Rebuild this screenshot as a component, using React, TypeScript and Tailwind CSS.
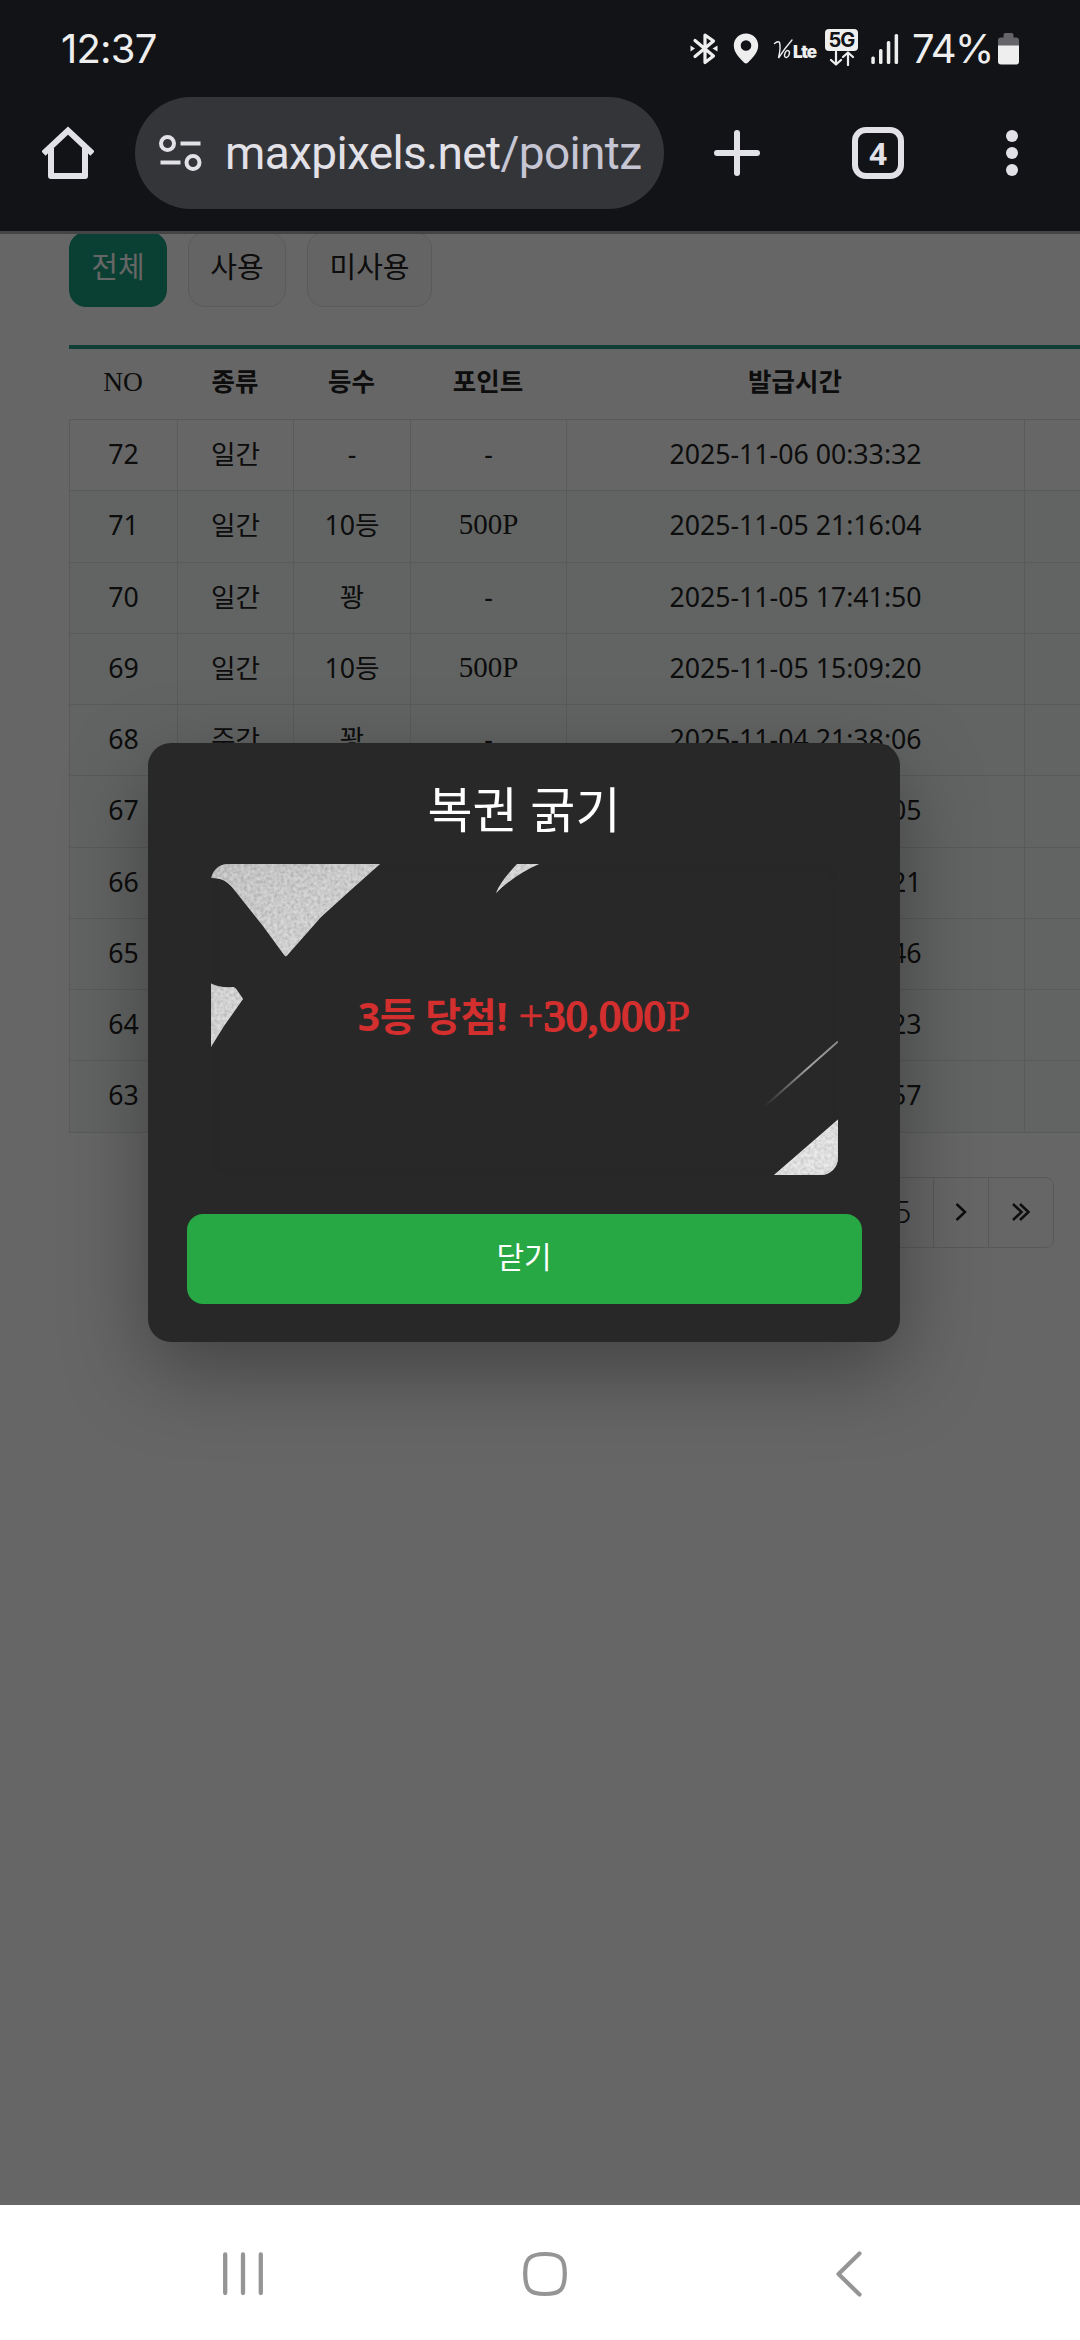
import React from "react";

const ink = "#e3e1e8";

const rows = [
  ["72", "일간", "-", "-", "2025-11-06 00:33:32"],
  ["71", "일간", "10등", "500P", "2025-11-05 21:16:04"],
  ["70", "일간", "꽝", "-", "2025-11-05 17:41:50"],
  ["69", "일간", "10등", "500P", "2025-11-05 15:09:20"],
  ["68", "주간", "꽝", "-", "2025-11-04 21:38:06"],
  ["67", "", "", "", "2025-11-04 19:22:05"],
  ["66", "", "", "", "2025-11-04 16:10:21"],
  ["65", "", "", "", "2025-11-03 22:41:46"],
  ["64", "", "", "", "2025-11-03 18:05:23"],
  ["63", "", "", "", "2025-11-03 14:12:57"],
];

const grid =
  "grid grid-cols-[108px_116px_117px_156px_458px_200px] text-center";

function StatusBar() {
  return (
    <div className="flex h-[97px] items-start pt-[24px] pl-[61px] text-[#eeeeee] font-['Inter']">
      <span className="w-[629px] text-[40px] leading-[49px] tracking-[-0.8px]">12:37</span>
      <svg className="mt-[8px] h-[33px] w-[28px]" viewBox="0 0 28 33" fill="none" stroke="#eee" strokeWidth="3.200" strokeLinejoin="round" strokeLinecap="round">
        <path d="M5 8.500L23.500 24L15 30.500V3L23.500 9L5 24.500" />
        <path d="M0.500 13.500V19.500L5 16.500ZM27.500 13.500V19.500L22.500 16.500Z" fill="#eee" stroke="none" />
      </svg>
      <svg className="mt-[9px] ml-[15px] h-[31px] w-[26px]" viewBox="0 0 26 31">
        <path fillRule="evenodd" fill="#eee" d="M13 0.500C6 0.500 0.800 5.800 0.800 12.500C0.800 20 7 25 11.200 29.800Q13 31.300 14.800 29.800C19 25 25.200 20 25.200 12.500C25.200 5.800 20 0.500 13 0.500ZM13 7.200A5.300 5.300 0 1 1 13 17.800A5.300 5.300 0 1 1 13 7.200Z" />
      </svg>
      <div className="mt-[15px] ml-[14px] flex h-[22px] w-[42px] items-end">
        <svg className="h-[22px] w-[20px] shrink-0" viewBox="0 0 20 22" fill="none" stroke="#eee" strokeLinecap="round">
          <path d="M1.500 4.500Q5.500 1.500 6.500 3.500Q8 8 5.500 19Q12 9 19 1" strokeWidth="1.400" />
          <ellipse cx="14" cy="15" rx="2.200" ry="3.600" transform="rotate(20 14 15)" strokeWidth="1.400" />
        </svg>
        <span className="text-[17px] leading-[18px] font-black tracking-[-1.1px]">Lte</span>
      </div>
      <div className="mt-[5px] ml-[10px] flex w-[33px] flex-col items-center">
        <div className="h-[22px] w-[33px] rounded-[4px] bg-[#eee] text-center text-[20px] leading-[22px] font-bold tracking-[-0.8px] text-[#121317]">5G</div>
        <svg className="h-[15px] w-[26px]" viewBox="0 0 26 15" fill="none" stroke="#eee" strokeWidth="2.200" strokeLinecap="round" strokeLinejoin="round">
          <path d="M7 1V13M2 9L7 13.500L12 9M19 14V2M14 6L19 1.500L24 6" />
        </svg>
      </div>
      <svg className="mt-[10px] ml-[13px] h-[30px] w-[28px]" viewBox="0 0 28 30" fill="#eee">
        <rect x="0.300" y="22.500" width="3.500" height="7.500" rx="1.500" />
        <rect x="8" y="15" width="3.500" height="15" rx="1.500" />
        <rect x="15.800" y="7" width="3.500" height="23" rx="1.500" />
        <rect x="23.600" y="0" width="3.500" height="30" rx="1.500" />
      </svg>
      <span className="ml-[13px] w-[86px] text-[40px] leading-[49px] tracking-[-1.6px]">74%</span>
      <svg className="mt-[9px] h-[32px] w-[21px]" viewBox="0 0 21 32">
        <path d="M0 13V7Q0 4.500 3 4.500H5.500V2Q5.500 0 7.500 0H13.500Q15.500 0 15.500 2V4.500H18Q21 4.500 21 7.500V13Z" fill="#656569" />
        <path d="M0 12.500H21V28.500Q21 31.500 18 31.500H3Q0 31.500 0 28.500Z" fill="#eee" />
      </svg>
    </div>
  );
}

function BrowserBar() {
  return (
    <div className="flex h-[134px] items-start pl-[42px]">
      <svg className="mt-[29px] h-[54px] w-[52px]" viewBox="0 0 52 54" fill="none" stroke={ink} strokeWidth="6" strokeLinejoin="round">
        <path d="M1.500 27.500L26 4.500L50.500 27.500" strokeLinejoin="miter" />
        <path d="M9 22V50H43V22" />
      </svg>
      <div className="ml-[41px] flex h-[112px] w-[529px] items-center rounded-full bg-[#343539] pl-[24px]">
        <svg className="h-[38px] w-[43px] shrink-0" viewBox="0 0 43 38" fill="none" stroke={ink} strokeWidth="4">
          <circle cx="8.500" cy="9.500" r="6.500" />
          <path d="M21.500 9.500H41.500M1.500 28.500H21.500" />
          <circle cx="34" cy="28.500" r="6.500" />
        </svg>
        <span className="ml-[23px] font-['Roboto'] text-[46px] leading-[60px] tracking-[-0.65px] whitespace-nowrap text-[#e3e1e8]">
          maxpixels.net<span className="text-[#c5c5d3]">/pointz</span>
        </span>
      </div>
      <svg className="mt-[32px] ml-[49px] h-[48px] w-[48px]" viewBox="0 0 48 48" fill="none" stroke={ink} strokeWidth="6" strokeLinecap="round">
        <path d="M4 24H44M24 4V44" />
      </svg>
      <div className="mt-[30px] ml-[91px] flex h-[52px] w-[52px] items-center justify-center rounded-[14px] border-[6px] border-[#e3e1e8] font-['Open_Sans'] text-[31px] leading-none font-bold text-[#e3e1e8]">
        4
      </div>
      <div className="mt-[33px] ml-[102px] flex flex-col gap-[5px]">
        <i className="size-[12px] rounded-full bg-[#e3e1e8]" />
        <i className="size-[12px] rounded-full bg-[#e3e1e8]" />
        <i className="size-[12px] rounded-full bg-[#e3e1e8]" />
      </div>
    </div>
  );
}

function History() {
  return (
    <div className="pt-px pl-[69px] text-[26.7px] text-[#222]">
      <div className="flex gap-[21px] text-[29px] leading-[40px]">
        <div className="h-[75px] w-[98px] rounded-[17px] bg-[#19a080] pt-[15px] text-center text-white">전체</div>
        <div className="h-[75px] w-[98px] rounded-[17px] border border-[#e0e0e0] bg-[#fbfbfb] pt-[14px] text-center">사용</div>
        <div className="h-[75px] w-[125px] rounded-[17px] border border-[#e0e0e0] bg-[#fbfbfb] pt-[14px] text-center">미사용</div>
      </div>
      <div className="mt-[38px] w-[1156px]">
        <div className={`${grid} h-[74px] border-t-4 border-[#2e9e84] text-[25.5px] leading-[65px] font-bold`}>
          <div className="font-['Liberation_Serif'] text-[27.5px] font-normal">NO</div>
          <div>종류</div>
          <div>등수</div>
          <div>포인트</div>
          <div>발급시간</div>
          <div />
        </div>
        <div className="border-t border-l border-[#e0e0e0]">
          {rows.map((r, i) => (
            <div key={r[0]} className={`${grid} h-[71.25px] leading-[67px] ${i ? "bg-[#f5faf8]" : "bg-white"}`}>
              {r.map((c, j) => (
                <div
                  key={j}
                  className={`border-r border-b border-[#e0e0e0] ${c.endsWith("P") ? "font-['Liberation_Serif'] text-[29px]" : ""}`}
                >
                  {c}
                </div>
              ))}
              <div className="border-b border-[#e0e0e0]" />
            </div>
          ))}
        </div>
      </div>
      <div className="mt-[44px] flex w-[985px] justify-end">
        <div className="flex h-[71px] rounded-[8px] border border-[#dcdfe0] text-[32px] font-light">
          <div className="w-[62px] border-r border-[#dcdfe0] text-center leading-[66px]">5</div>
          <div className="flex w-[55px] items-center justify-center border-r border-[#dcdfe0]">
            <svg className="h-[20px] w-[12px]" viewBox="0 0 12 20" fill="none" stroke="#222" strokeWidth="2.500">
              <path d="M1.500 2L10 10L1.500 18" />
            </svg>
          </div>
          <div className="flex w-[64px] items-center justify-center">
            <svg className="h-[20px] w-[20px]" viewBox="0 0 20 20" fill="none" stroke="#222" strokeWidth="2.500">
              <path d="M2 2L10.500 10L2 18M9 2L17.500 10L9 18" />
            </svg>
          </div>
        </div>
      </div>
    </div>
  );
}

function ScratchCard() {
  return (
    <div className="relative mx-auto mt-[20px] h-[311px] w-[627px] overflow-hidden rounded-[17px] bg-[#282828]">
      <svg className="absolute inset-0 h-full w-full" viewBox="0 0 627 311">
        <defs>
          <linearGradient id="foil" x1="0" y1="0" x2="1" y2="1">
            <stop offset="0" stopColor="#a8a8a8" />
            <stop offset="0.25" stopColor="#c6c6c6" />
            <stop offset="0.45" stopColor="#b8b8b8" />
            <stop offset="1" stopColor="#e0e0e0" />
          </linearGradient>
          <filter id="grain" x="0" y="0" width="100%" height="100%">
            <feTurbulence type="fractalNoise" baseFrequency="0.3" numOctaves="2" seed="4" />
            <feColorMatrix values="1 0 0 0 0.25  1 0 0 0 0.25  1 0 0 0 0.25  0 0 0 0 0.45" />
          </filter>
          <clipPath id="pieces">
            <path d="M0 0H169L142 24L110 53L76 91.500Q75 93 73.500 91.500L52 62L25 28Q17 17 9 15Q5 14 0 14Z" />
            <path d="M0 119.500Q8 124 22 123Q24 123 26 126L32 135L13 162Q6 173 0 183Z" />
            <path d="M306 0H328Q303 11 285 29Q289 18 306 0Z" />
            <path d="M563 311L627 255.500V311Z" />
          </clipPath>
          <linearGradient id="streak" x1="0" y1="1" x2="1" y2="0">
            <stop offset="0" stopColor="#999" stopOpacity="0" />
            <stop offset="0.6" stopColor="#a5a5a5" />
            <stop offset="1" stopColor="#8a8a8a" />
          </linearGradient>
        </defs>
        <g clipPath="url(#pieces)">
          <rect width="627" height="311" fill="url(#foil)" />
          <rect width="627" height="311" filter="url(#grain)" />
        </g>
        <path d="M553.500 242.500L627 177.500" stroke="url(#streak)" strokeWidth="2" />
      </svg>
      <div className="absolute inset-0 rounded-[17px] shadow-[inset_0_0_10px_rgba(0,0,0,0.05)]" />
      <div className="relative pt-[124px] text-center text-[39px] leading-[56px] font-bold whitespace-nowrap text-[#d32f2f]">
        <span className="tracking-[-0.25px]">3등 당첨!</span>
        <span className="font-['Liberation_Serif'] text-[44px] font-normal tracking-[0.2px] [-webkit-text-stroke:0.6px_#d32f2f]">
          {" "}+<span className="[-webkit-text-stroke:1.8px_#d32f2f]">30,000</span>P
        </span>
      </div>
    </div>
  );
}

function Modal() {
  return (
    <div className="h-[599px] w-[752px] rounded-[23px] bg-[#282828] pt-[31px] text-center text-white shadow-[0_28px_84px_rgba(0,0,0,0.35)]">
      <h2 className="text-[49px] leading-[70px]">복권 굵기</h2>
      <ScratchCard />
      <button className="mt-[39px] h-[90px] w-[675px] rounded-[16px] bg-[#28a745] pb-[5px] text-[30px] leading-[44px]">닫기</button>
    </div>
  );
}

export default function App() {
  return (
    <div className="flex h-[2340px] w-[1080px] flex-col overflow-hidden bg-white font-['Noto_Sans','Noto_Sans_CJK_KR',sans-serif]">
      <header className="h-[231px] bg-[#121317]">
        <StatusBar />
        <BrowserBar />
      </header>
      <main className="relative h-[1974px] overflow-hidden bg-white">
        <History />
        <div className="absolute inset-0 bg-black/60 pt-[512px] pl-[148px]">
          <Modal />
        </div>
        <div className="absolute inset-x-0 top-0 h-[3px] bg-[#444]" />
      </main>
      <nav className="flex h-[135px] items-start bg-white pt-[46px] pl-[222px]">
        <svg className="h-[46px] w-[42px]" viewBox="0 0 42 46" stroke="#959595" strokeWidth="4.300" strokeLinecap="round">
          <path d="M3.200 3.500V42M21 3.500V42M38.800 3.500V42" />
        </svg>
        <svg className="ml-[258px] h-[46px] w-[46px]" viewBox="0 0 46 46" fill="none" stroke="#959595" strokeWidth="4.200">
          <path d="M23 3Q34 3 38.500 7T42.800 23T38.500 39T23 43T7.500 39T3.200 23T7.500 7T23 3Z" />
        </svg>
        <svg className="ml-[267px] h-[47px] w-[28px]" viewBox="0 0 28 47" fill="none" stroke="#959595" strokeWidth="4.200" strokeLinecap="round" strokeLinejoin="round">
          <path d="M24.500 2.500L3.500 23L24.500 43.500" />
        </svg>
      </nav>
    </div>
  );
}
